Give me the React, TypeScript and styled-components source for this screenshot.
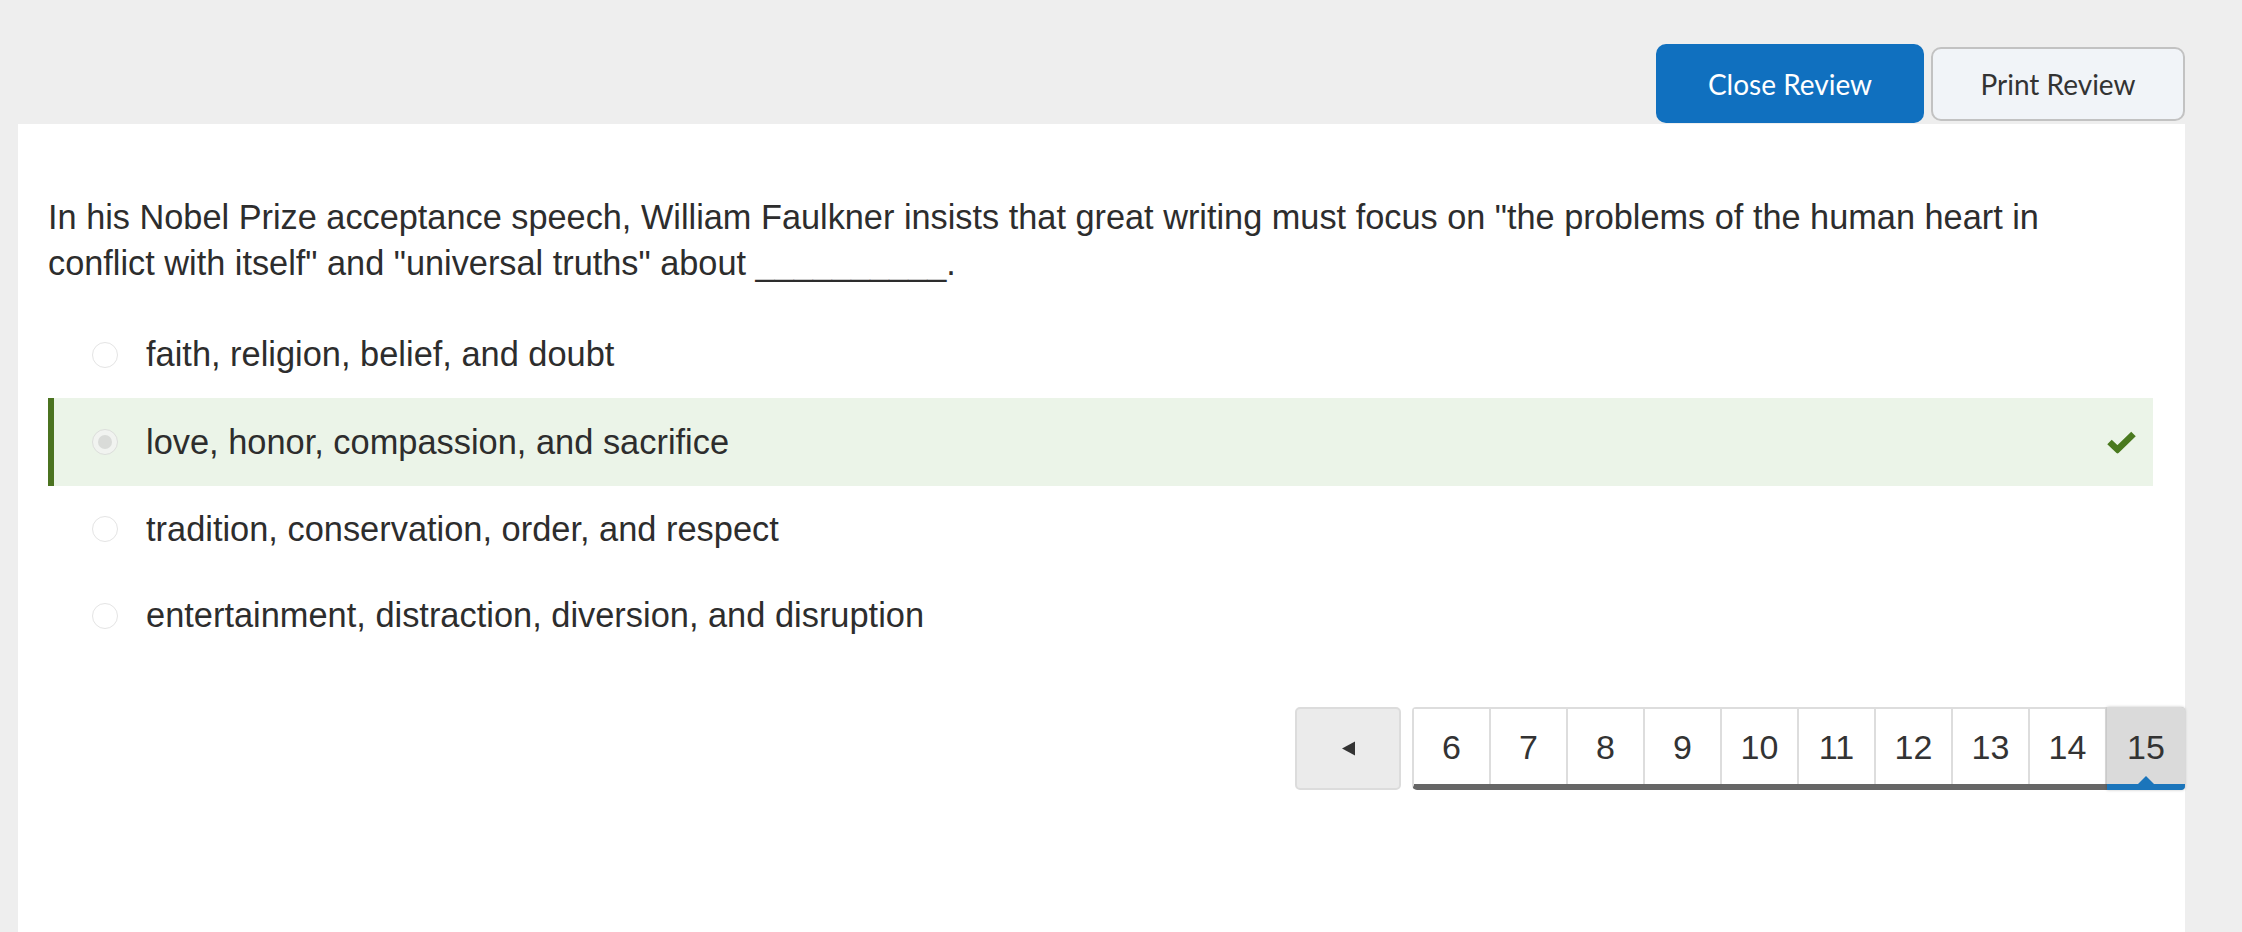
import React from "react";
import styled, { createGlobalStyle, css } from "styled-components";

const GlobalStyle = createGlobalStyle`
  html, body {
    margin: 0;
    padding: 0;
    background: #eeeeee;
  }
  body {
    font-family: "Liberation Sans", Arial, Helvetica, sans-serif;
    color: #2f2f2f;
  }
  * { box-sizing: border-box; }
`;

const Page = styled.div`
  width: 2185px;
  padding-left: 18px;
  min-height: 932px;
  display: flex;
  flex-direction: column;
`;

const Toolbar = styled.div`
  display: flex;
  justify-content: flex-end;
  align-items: flex-start;
  gap: 7px;
  padding-top: 44px;
  height: 124px;
`;

const BaseButton = styled.button`
  font-family: Lato, "Liberation Sans", sans-serif;
  font-size: 28px;
  border-radius: 10px;
  cursor: pointer;
`;

const PrimaryButton = styled(BaseButton)`
  background: #1070bf;
  color: #ffffff;
  border: none;
  width: 268px;
  height: 79px;
`;

const SecondaryButton = styled(BaseButton)`
  background: #f1f4f8;
  color: #333333;
  border: 2px solid #c2c2c2;
  width: 254px;
  height: 74px;
  margin-top: 3px;
`;

const Panel = styled.main`
  flex: 1;
  background: #ffffff;
  padding: 70px 0 40px 30px;
  min-height: 808px;
`;

const Question = styled.p`
  margin: 0 0 25.5px 0;
  max-width: 2080px;
  font-size: 34.3px;
  line-height: 46px;
  color: #2d2d2d;
`;

const OptionList = styled.div`
  display: flex;
  flex-direction: column;
  margin-right: 32px;
`;

const OptionRow = styled.div<{ $correct?: boolean }>`
  position: relative;
  display: flex;
  align-items: center;
  height: 86.5px;
  padding-left: 38px;
  font-size: 34.4px;
  color: #2d2d2d;
  border-left: 6px solid transparent;
  ${(p) =>
    p.$correct &&
    css`
      background: #ebf4e8;
      border-left-color: #4b7320;
      height: 88px;
    `}
`;

const Radio = styled.span<{ $checked?: boolean }>`
  width: 26px;
  height: 26px;
  border-radius: 50%;
  border: 1.5px solid #e4e4e4;
  background: #ffffff;
  margin-right: 28px;
  flex-shrink: 0;
  display: flex;
  align-items: center;
  justify-content: center;
  ${(p) =>
    p.$checked &&
    css`
      background: #f1f3f0;
      border-color: #dcdedb;
      &::after {
        content: "";
        width: 14px;
        height: 14px;
        border-radius: 50%;
        background: #d9dbd8;
      }
    `}
`;

const CheckMark = styled.svg`
  position: absolute;
  right: 17px;
  top: 50%;
  transform: translateY(-50%);
  width: 29px;
  height: 23px;
`;

const Pager = styled.nav`
  display: flex;
  justify-content: flex-end;
  align-items: flex-start;
  gap: 11px;
  margin-top: 48px;
`;

const PrevButton = styled.button`
  width: 106px;
  height: 83px;
  background: #ebebeb;
  border: 2px solid #dcdcdc;
  border-radius: 5px;
  display: flex;
  align-items: center;
  justify-content: center;
  cursor: pointer;
  padding: 0;
`;

const PageGroup = styled.div`
  display: flex;
  align-items: flex-start;
  height: 83px;
  border-top: 2px solid #dddddd;
  border-left: 2px solid #dddddd;
  border-bottom: 6px solid #666666;
  border-radius: 4px 4px 5px 5px;
`;

const PageCell = styled.button<{ $active?: boolean; $last?: boolean }>`
  position: relative;
  width: 77px;
  height: 75px;
  padding: 2px 0 0;
  background: #ffffff;
  border: none;
  border-right: 2px solid #dddddd;
  font-family: "Liberation Sans", Arial, sans-serif;
  font-size: 34px;
  color: #333333;
  cursor: pointer;
  ${(p) =>
    p.$last &&
    css`
      border-right: none;
    `}
  ${(p) =>
    p.$active &&
    css`
      width: 78px;
      margin-top: -2px;
      height: 83px;
      margin-bottom: -6px;
      padding-top: 4px;
      background: #dadada;
      border-bottom: 6px solid #1b75bb;
      border-radius: 0 4px 4px 0;
      box-shadow: 0 0 3px rgba(0, 0, 0, 0.25);
      &::after {
        content: "";
        position: absolute;
        left: 50%;
        bottom: 0;
        transform: translateX(-50%);
        border-left: 8px solid transparent;
        border-right: 8px solid transparent;
        border-bottom: 8px solid #1b75bb;
      }
    `}
`;

const options = [
  { text: "faith, religion, belief, and doubt", correct: false },
  { text: "love, honor, compassion, and sacrifice", correct: true },
  { text: "tradition, conservation, order, and respect", correct: false },
  { text: "entertainment, distraction, diversion, and disruption", correct: false },
];

const pages = [6, 7, 8, 9, 10, 11, 12, 13, 14, 15];

export default function App() {
  return (
    <>
      <GlobalStyle />
      <Page>
        <Toolbar>
          <PrimaryButton>Close Review</PrimaryButton>
          <SecondaryButton>Print Review</SecondaryButton>
        </Toolbar>
        <Panel>
          <Question>
            In his Nobel Prize acceptance speech, William Faulkner insists that great writing must
            focus on "the problems of the human heart in conflict with itself" and "universal
            truths" about __________.
          </Question>
          <OptionList>
            {options.map((o) => (
              <OptionRow key={o.text} $correct={o.correct}>
                <Radio $checked={o.correct} />
                {o.text}
                {o.correct && (
                  <CheckMark viewBox="0 0 29 23">
                    <path
                      d="M2.5 11.5 L10.5 19 L26.5 3.5"
                      fill="none"
                      stroke="#4a7a1f"
                      strokeWidth="6.5"
                      strokeLinejoin="miter"
                    />
                  </CheckMark>
                )}
              </OptionRow>
            ))}
          </OptionList>
          <Pager>
            <PrevButton aria-label="Previous">
              <svg width="15" height="15" viewBox="0 0 15 15">
                <path d="M1 7.5 L14 0.5 L14 14.5 Z" fill="#333" />
              </svg>
            </PrevButton>
            <PageGroup>
              {pages.map((n, i) => (
                <PageCell key={n} $active={n === 15} $last={i === pages.length - 1}>
                  {n}
                </PageCell>
              ))}
            </PageGroup>
          </Pager>
        </Panel>
      </Page>
    </>
  );
}
